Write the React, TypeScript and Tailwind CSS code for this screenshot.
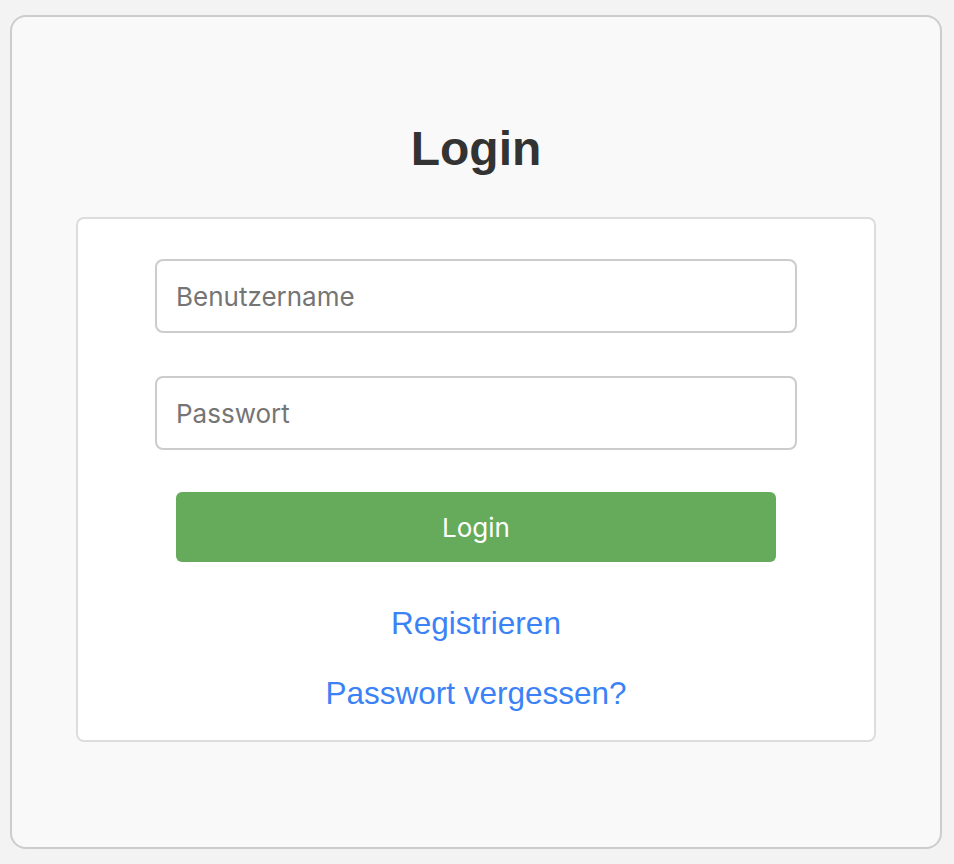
import { useState } from "react";

// Login-Seite: graues Panel, weisse Karte mit Formular und zwei Links.
export default function App() {
  const [username, setUsername] = useState("");
  const [password, setPassword] = useState("");

  return (
    <div className="min-h-[864px] bg-[#f3f3f3] pt-[15px] pr-[12px] pl-[10px] font-['Liberation_Sans',Arial,sans-serif]">
      <div className="flex h-[834px] flex-col items-center rounded-[16px] border-2 border-[#cccccc] bg-[#f9f9f9] pt-[104px]">
        <h1 className="text-[48px] leading-[56px] font-bold text-[#333333]">Login</h1>

        <form
          onSubmit={(e) => e.preventDefault()}
          className="mt-[40px] flex w-[800px] flex-col items-center rounded-[8px] border-2 border-[#dddddd] bg-white pt-[40px] pb-[27px]"
        >
          <input
            type="text"
            value={username}
            onChange={(e) => setUsername(e.target.value)}
            placeholder="Benutzername"
            className="h-[74px] w-[642px] rounded-[8px] border-2 border-[#cccccc] px-[19px] font-['Inter',sans-serif] text-[26px] text-[#333333] outline-none placeholder:text-[#757575]"
          />
          <input
            type="password"
            value={password}
            onChange={(e) => setPassword(e.target.value)}
            placeholder="Passwort"
            className="mt-[43px] h-[74px] w-[642px] rounded-[8px] border-2 border-[#cccccc] px-[19px] font-['Inter',sans-serif] text-[26px] text-[#333333] outline-none placeholder:text-[#757575]"
          />
          <button
            type="submit"
            className="mt-[42px] h-[70px] w-[600px] rounded-[6px] bg-[#66ab5c] font-['Inter',sans-serif] text-[26px] text-white"
          >
            Login
          </button>

          <a href="#" className="mt-[41px] text-[31.5px] leading-[40px] text-[#3b82f6]">
            Registrieren
          </a>
          <a href="#" className="mt-[30px] text-[31.5px] leading-[40px] text-[#3b82f6]">
            Passwort vergessen?
          </a>
        </form>
      </div>
    </div>
  );
}
